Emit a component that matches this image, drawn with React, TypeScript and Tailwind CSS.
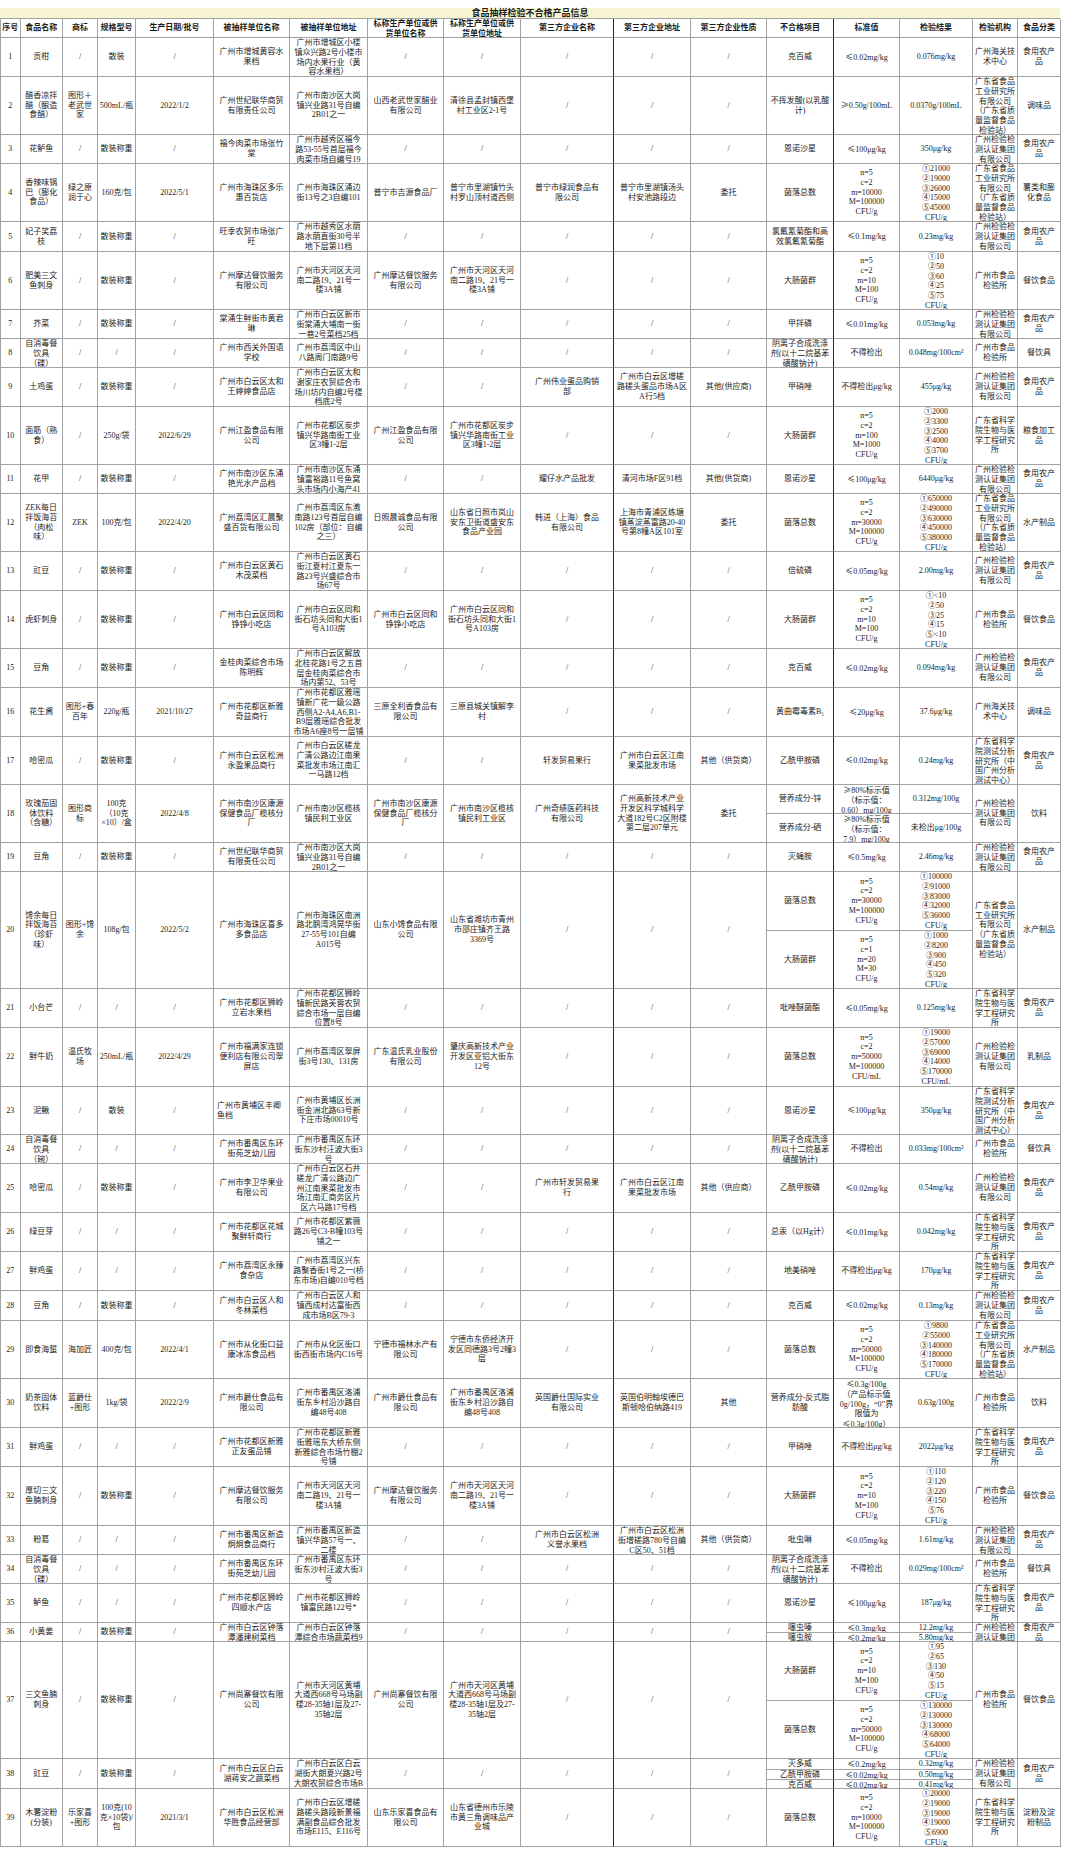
import React from 'react';

type Item = [string, string, string];
type Row = {
  c: string[];
  items: Item[];
  lab: string;
  cat: string;
  h: number[];
  left?: boolean;
};

const S = '/';
const LAB_GZ = '广州检验检测认证集团有限公司';
const LAB_GDFOOD = '广东省食品工业研究所有限公司（广东省质量监督食品检验站）';
const LAB_HG = '广州海关技术中心';
const LAB_SP = '广州市食品检验所';
const LAB_SWY = '广东省科学院生物与医学工程研究所';
const LAB_CS = '广东省科学院测试分析研究所（中国广州分析测试中心）';
const ANION = '阴离子合成洗涤剂(以十二烷基苯磺酸钠计)';
const NY = '食用农产品';

const std = (n: number, c: number, m: number, M: number, u = 'CFU/g') =>
  `n=${n}\nc=${c}\nm=${m}\nM=${M}\n${u}`;
const res = (a: (number | string)[], u = 'CFU/g') =>
  a.map((v, i) => '①②③④⑤'[i] + v).join('\n') + '\n' + u;

const R = (c: string[], items: Item[], lab: string, cat: string, h: number[], left = false): Row => ({
  c,
  items,
  lab,
  cat,
  h,
  left,
});

const rows: Row[] = [
  R(['1', '贡柑', S, '散装', S, '广州市增城黄容水果档', '广州市增城区小楼镇众兴路2号小楼市场内水果行业（黄容水果档）', S, S, S, S, S], [['克百威', '≤0.02mg/kg', '0.076mg/kg']], LAB_HG, NY, [39]),
  R(['2', '醋香凉拌醋（酿造食醋）', '图形＋老武世家', '500mL/瓶', '2022/1/2', '广州世纪联华商贸有限责任公司', '广州市南沙区大岗镇兴业路31号自编2B01之一', '山西老武世家醋业有限公司', '清徐县孟封镇西堡村工业区2-1号', S, S, S], [['不挥发酸(以乳酸计)', '≥0.50g/100mL', '0.0370g/100mL']], LAB_GDFOOD, '调味品', [58]),
  R(['3', '花鲈鱼', S, '散装称重', S, '福今肉菜市场张竹棠', '广州市越秀区福今路53-55号首层福今肉菜市场自编号19', S, S, S, S, S], [['恩诺沙星', '≤100μg/kg', '350μg/kg']], LAB_GZ, NY, [29]),
  R(['4', '香辣味锅巴（膨化食品）', '绿之原润于心', '160克/包', '2022/5/1', '广州市海珠区多乐惠百货店', '广州市海珠区涌边街13号之3自编101', '普宁市吉源食品厂', '普宁市里湖镇竹头村罗山顶村道西侧', '普宁市绿润食品有限公司', '普宁市里湖镇汤头村安池路段边', '委托'], [['菌落总数', std(5, 2, 10000, 100000), res([21000, 19000, 26000, 15000, 45000])]], LAB_GDFOOD, '薯类和膨化食品', [58]),
  R(['5', '妃子笑荔枝', S, '散装称重', S, '旺季农贸市场张广旺', '广州市越秀区水荫路水荫直街30号半地下层第11档', S, S, S, S, S], [['氯氟氰菊酯和高效氯氟氰菊酯', '≤0.1mg/kg', '0.23mg/kg']], LAB_GZ, NY, [30]),
  R(['6', '肥美三文鱼刺身', S, '散装称重', S, '广州摩达餐饮服务有限公司', '广州市天河区天河南二路19、21号一楼3A铺', '广州摩达餐饮服务有限公司', '广州市天河区天河南二路19、21号一楼3A铺', S, S, S], [['大肠菌群', std(5, 2, 10, 100), res([10, 50, 60, 25, 75])]], LAB_SP, '餐饮食品', [58]),
  R(['7', '芥菜', S, '散装称重', S, '棠涌生鲜街市黄君琳', '广州市白云区新市街棠涌大埔南一街一巷2号菜档25档', S, S, S, S, S], [['甲拌磷', '≤0.01mg/kg', '0.053mg/kg']], LAB_GZ, NY, [29]),
  R(['8', '自消毒餐饮具（碟）', S, S, S, '广州市西关外国语学校', '广州市荔湾区中山八路周门南路9号', S, S, S, S, S], [[ANION, '不得检出', '0.048mg/100cm²']], LAB_SP, '餐饮具', [29]),
  R(['9', '土鸡蛋', S, '散装称重', S, '广州市白云区太和王婷婷食品店', '广州市白云区太和谢家庄农贸综合市场川坊内自编2号楼档底2号', S, S, '广州伟业蛋品购销部', '广州市白云区增槎路槎头蛋品市场A区A行5档', '其他(供应商)'], [['甲硝唑', '不得检出μg/kg', '455μg/kg']], LAB_GZ, NY, [39]),
  R(['10', '面筋（熟食）', S, '250g/袋', '2022/6/29', '广州江盈食品有限公司', '广州市花都区炭步镇兴华路南街工业区3幢1-2层', '广州江盈食品有限公司', '广州市花都区炭步镇兴华路南街工业区3幢1-2层', S, S, S], [['大肠菌群', std(5, 2, 100, 1000), res([2000, 3300, 2500, 4000, 3700])]], LAB_SWY, '粮食加工品', [58]),
  R(['11', '花甲', S, '散装称重', S, '广州市南沙区东涌艳光水产品档', '广州市南沙区东涌镇富裕路11号鱼窝头市场内小海产41档', S, S, '耀仔水产品批发', '清河市场F区91档', '其他(供货商)'], [['恩诺沙星', '≤100μg/kg', '6440μg/kg']], LAB_GZ, NY, [29]),
  R(['12', 'ZEK每日拌饭海苔（肉松味）', 'ZEK', '100克/包', '2022/4/20', '广州荔湾区汇晨聚盛百货有限公司', '广州市荔湾区东漖南路123号首层自编102房（部位：自编之三）', '日照晨诚食品有限公司', '山东省日照市岚山安东卫街道盛安东食品产业园', '韩进（上海）食品有限公司', '上海市青浦区练塘镇蒸淀蒸富路20-40号第8幢A区101室', '委托'], [['菌落总数', std(5, 2, 30000, 100000), res([650000, 490000, 630000, 450000, 380000])]], LAB_GDFOOD, '水产制品', [58]),
  R(['13', '豇豆', S, '散装称重', S, '广州市白云区黄石木茂菜档', '广州市白云区黄石街江夏村江夏东一路23号兴盛综合市场67号', S, S, S, S, S], [['倍硫磷', '≤0.05mg/kg', '2.00mg/kg']], LAB_GZ, NY, [39]),
  R(['14', '虎虾刺身', S, '散装称重', S, '广州市白云区同和铮铮小吃店', '广州市白云区同和街石坊头同和大街1号A103房', '广州市白云区同和铮铮小吃店', '广州市白云区同和街石坊头同和大街1号A103房', S, S, S], [['大肠菌群', std(5, 2, 10, 100), '①<10\n②50\n③25\n④15\n⑤<10\nCFU/g']], LAB_SP, '餐饮食品', [58]),
  R(['15', '豆角', S, '散装称重', S, '金桂肉菜综合市场陈明辉', '广州市白云区解放北桂花路1号之五首层金桂肉菜综合市场内第52、53号', S, S, S, S, S], [['克百威', '≤0.02mg/kg', '0.094mg/kg']], LAB_GZ, NY, [39]),
  R(['16', '花生酱', '图形+春百年', '220g/瓶', '2021/10/27', '广州市花都区新雅奇益商行', '广州市花都区雅瑶镇新广花一级公路西侧A2-A4,A6,B1-B9层雅瑶综合批发市场A6座8号一层铺', '三原全利香食品有限公司', '三原县城关镇解李村', S, S, S], [['黄曲霉毒素B₁', '≤20μg/kg', '37.6μg/kg']], LAB_HG, '调味品', [49]),
  R(['17', '哈密瓜', S, '散装称重', S, '广州市白云区松洲永盈果品商行', '广州市白云区槎龙广清公路边江南果菜批发市场江南汇一马路12档', S, S, '轩发贸易果行', '广州市白云区江南果菜批发市场', '其他（供货商）'], [['乙酰甲胺磷', '≤0.02mg/kg', '0.24mg/kg']], LAB_CS, NY, [48]),
  R(['18', '玫瑰茄固体饮料（含糖）', '图形商标', '100克（10克×10）/盒', '2022/4/8', '广州市南沙区康源保健食品厂榄核分厂', '广州市南沙区榄核镇民利工业区', '广州市南沙区康源保健食品厂榄核分厂', '广州市南沙区榄核镇民利工业区', '广州奇绩医药科技有限公司', '广州高新技术产业开发区科学城科学大道182号C2区附楼第二层207单元', '委托'], [['营养成分-锌', '≥80%标示值（标示值：0.60）mg/100g', '0.312mg/100g'], ['营养成分-硒', '≥80%标示值（标示值：7.9）mg/100g', '未检出μg/100g']], LAB_GZ, '饮料', [29, 29]),
  R(['19', '豆角', S, '散装称重', S, '广州世纪联华商贸有限责任公司', '广州市南沙区大岗镇兴业路31号自编2B01之一', S, S, S, S, S], [['灭蝇胺', '≤0.5mg/kg', '2.46mg/kg']], LAB_GZ, NY, [29]),
  R(['20', '馋余每日拌饭海苔（珍虾味）', '图形+馋余', '108g/包', '2022/5/2', '广州市海珠区喜多多食品店', '广州市海珠区南洲路北鹅湾鸿晃华街27-55号101自编A015号', '山东小馋食品有限公司', '山东省潍坊市青州市邵庄镇齐王路3369号', S, S, S], [['菌落总数', std(5, 2, 30000, 100000), res([100000, 91000, 83000, 32000, 36000])], ['大肠菌群', std(5, 1, 20, 30), res([1000, 8200, 900, 450, 320])]], LAB_GDFOOD, '水产制品', [59, 58]),
  R(['21', '小台芒', S, S, S, '广州市花都区狮岭立岩水果档', '广州市花都区狮岭镇新民路芙蓉农贸综合市场一层自编位置8号', S, S, S, S, S], [['吡唑醚菌酯', '≤0.05mg/kg', '0.125mg/kg']], LAB_SWY, NY, [39]),
  R(['22', '鲜牛奶', '温氏牧场', '250mL/瓶', '2022/4/29', '广州市福满家连锁便利店有限公司翠屏店', '广州市荔湾区翠屏街3号130、131房', '广东温氏乳业股份有限公司', '肇庆高新技术产业开发区亚铝大街东12号', S, S, S], [['菌落总数', std(5, 2, 50000, 100000, 'CFU/mL'), res([19000, 57000, 69000, 14000, 170000], 'CFU/mL')]], LAB_GZ, '乳制品', [59]),
  R(['23', '泥鳅', S, '散装', S, '广州市黄埔区丰卿鱼档', '广州市黄埔区长洲街金洲北路63号新下庄市场00010号', S, S, S, S, S], [['恩诺沙星', '≤100μg/kg', '350μg/kg']], LAB_CS, NY, [48], true),
  R(['24', '自消毒餐饮具（碗）', S, S, S, '广州市番禺区东环街苑芝幼儿园', '广州市番禺区东环街东沙村汪波大街3号', S, S, S, S, S], [[ANION, '不得检出', '0.033mg/100cm²']], LAB_SP, '餐饮具', [29]),
  R(['25', '哈密瓜', S, '散装称重', S, '广州市李卫华果业有限公司', '广州市白云区石井槎龙广清公路边广州江南果菜批发市场江南汇商务区片区六马路17号档', S, S, '广州市轩发贸易果行', '广州市白云区江南果菜批发市场', '其他（供应商）'], [['乙酰甲胺磷', '≤0.02mg/kg', '0.54mg/kg']], LAB_GZ, NY, [49]),
  R(['26', '绿豆芽', S, S, S, '广州市花都区花城聚鲜轩商行', '广州市花都区紫薇路26号C3-B幢103号铺之一', S, S, S, S, S], [['总汞（以Hg计）', '≤0.01mg/kg', '0.042mg/kg']], LAB_SWY, NY, [39]),
  R(['27', '鲜鸡蛋', S, S, S, '广州市荔湾区永臻食杂店', '广州市荔湾区兴东路聚香街1号之一(桥东市场)自编010号档', S, S, S, S, S], [['地美硝唑', '不得检出μg/kg', '170μg/kg']], LAB_SWY, NY, [39]),
  R(['28', '豆角', S, '散装称重', S, '广州市白云区人和冬林菜档', '广州市白云区人和镇西成村达富街西成市场B区79-3', S, S, S, S, S], [['克百威', '≤0.02mg/kg', '0.13mg/kg']], LAB_GZ, NY, [30]),
  R(['29', '即食海蜇', '海加匠', '400克/包', '2022/4/1', '广州市从化街口益康冰冻食品档', '广州市从化区街口街西街市场内C16号', '宁德市福林水产有限公司', '宁德市东侨经济开发区同德路3号2幢3层', S, S, S], [['菌落总数', std(5, 2, 50000, 100000), res([9800, 55000, 140000, 180000, 170000])]], LAB_GDFOOD, '水产制品', [58]),
  R(['30', '奶茶固体饮料', '蓝爵仕+图形', '1kg/袋', '2022/2/9', '广州市爵仕食品有限公司', '广州市番禺区洛浦街东乡村沿沙路自编48号408', '广州市爵仕食品有限公司', '广州市番禺区洛浦街东乡村沿沙路自编48号408', '英国爵仕国际实业有限公司', '英国伯明翰埃德巴斯顿哈伯纳路419', '其他'], [['营养成分-反式脂肪酸', '≤0.3g/100g（产品标示值0g/100g，“0”界限值为≤0.3g/100g）', '0.63g/100g']], LAB_SP, '饮料', [49]),
  R(['31', '鲜鸡蛋', S, S, S, '广州市花都区新雅正友蛋品铺', '广州市花都区新雅街雅瑶东大桥东侧新雅综合市场竹棚2号铺', S, S, S, S, S], [['甲硝唑', '不得检出μg/kg', '2022μg/kg']], LAB_SWY, NY, [39]),
  R(['32', '厚切三文鱼腩刺身', S, '散装称重', S, '广州摩达餐饮服务有限公司', '广州市天河区天河南二路19、21号一楼3A铺', '广州摩达餐饮服务有限公司', '广州市天河区天河南二路19、21号一楼3A铺', S, S, S], [['大肠菌群', std(5, 2, 10, 100), res([110, 120, 220, 150, 76])]], LAB_SP, '餐饮食品', [59]),
  R(['33', '粉葛', S, S, S, '广州市番禺区新造炯炯食品商行', '广州市番禺区新造镇兴华路57号一、二楼', S, S, '广州市白云区松洲义誉水果档', '广州市白云区松洲街增槎路780号自编C区50、51档', '其他（供货商）'], [['吡虫啉', '≤0.05mg/kg', '1.61mg/kg']], LAB_GZ, NY, [29]),
  R(['34', '自消毒餐饮具（碟）', S, S, S, '广州市番禺区东环街苑芝幼儿园', '广州市番禺区东环街东沙村汪波大街3号', S, S, S, S, S], [[ANION, '不得检出', '0.029mg/100cm²']], LAB_SP, '餐饮具', [29]),
  R(['35', '鲈鱼', S, S, S, '广州市花都区狮岭四顺水产店', '广州市花都区狮岭镇富民路122号*', S, S, S, S, S], [['恩诺沙星', '≤100μg/kg', '187μg/kg']], LAB_SWY, NY, [39]),
  R(['36', '小黄姜', S, '散装称重', S, '广州市白云区钟落潭潘建树菜档', '广州市白云区钟落潭综合市场蔬菜档9号', S, S, S, S, S], [['噻虫嗪', '≤0.3mg/kg', '12.2mg/kg'], ['噻虫胺', '≤0.2mg/kg', '5.80mg/kg']], LAB_GZ, NY, [10, 9]),
  R(['37', '三文鱼腩刺身', S, '散装称重', S, '广州尚寨餐饮有限公司', '广州市天河区黄埔大道西668号马场副楼28-35轴1层及27-35轴2层', '广州尚寨餐饮有限公司', '广州市天河区黄埔大道西668号马场副楼28-35轴1层及27-35轴2层', S, S, S], [['大肠菌群', std(5, 2, 10, 100), res([95, 65, 130, 50, 15])], ['菌落总数', std(5, 2, 50000, 100000), res([130000, 130000, 130000, 68000, 64000])]], LAB_SP, '餐饮食品', [59, 58]),
  R(['38', '豇豆', S, '散装称重', S, '广州市白云区白云湖蒋安之蔬菜档', '广州市白云区白云湖街大朗夏兴路2号大朗农贸综合市场B区12号', S, S, S, S, S], [['灭多威', '≤0.2mg/kg', '0.32mg/kg'], ['乙酰甲胺磷', '≤0.02mg/kg', '0.50mg/kg'], ['克百威', '≤0.02mg/kg', '0.41mg/kg']], LAB_GZ, NY, [11, 10, 9]),
  R(['39', '木薯淀粉(分装)', '乐家喜+图形', '100克(10克×10袋)/包', '2021/3/1', '广州市白云区松洲华胜食品经营部', '广州市白云区增槎路槎头路段新景福满副食品综合批发市场E115、E116号', '山东乐家喜食品有限公司', '山东省德州市乐陵市黄三角调味品产业城', S, S, S], [['菌落总数', std(5, 2, 10000, 100000), res([20000, 19000, 19000, 19000, 6900])]], LAB_SWY, '淀粉及淀粉制品', [58]),
];

const headers = [
  '序号', '食品名称', '商标', '规格型号', '生产日期/批号', '被抽样单位名称', '被抽样单位地址',
  '标称生产单位或供货单位名称', '标称生产单位或供货单位地址', '第三方企业名称', '第三方企业地址',
  '第三方企业性质', '不合格项目', '标准值', '检验结果', '检验机构', '食品分类',
];

const colCls = [
  'px-0',
  'px-[1px]',
  'px-[1.5px]',
  'px-[1px]',
  'px-[3px]',
  'px-[3px]',
  'px-[3px]',
  'px-[3px]',
  'px-[3px]',
  'px-[11px] border-r-[#2a2a2a]',
  'px-[3px]',
  'px-[3px]',
  'px-[2px] border-r-[#2a2a2a]',
  'px-[5px]',
  'px-[2px]',
  'px-[1px]',
  'px-[2px]',
];

const spanCls = ['', '', 'row-span-2', 'row-span-3'];

const base =
  'flex flex-col [justify-content:safe_center] overflow-hidden border-r border-b border-[#a3a3a3] whitespace-pre-line';

function renderText(t: string) {
  return t.split(/([≤≥])/).map((p, i) =>
    p === '≤' || p === '≥' ? (
      <span key={i} className="font-['Noto_Sans_CJK_SC',sans-serif]">
        {p}
      </span>
    ) : (
      p
    ),
  );
}

function Cell({ text, col, span = 1, bold = false, left = false }: { text: string; col: number; span?: number; bold?: boolean; left?: boolean }) {
  return (
    <div className={`${base} ${colCls[col]} ${spanCls[span]} ${bold ? 'font-bold' : ''} ${left ? 'text-left' : 'text-center'}`}>
      <div>{renderText(text)}</div>
    </div>
  );
}

export default function App() {
  const tracks: number[] = [19];
  rows.forEach((r) => r.h.forEach((h) => tracks.push(h)));

  const cells: React.ReactNode[] = [];
  headers.forEach((h, i) => cells.push(<Cell key={`h${i}`} text={h} col={i} bold />));
  rows.forEach((r, ri) => {
    const n = r.items.length;
    r.c.forEach((t, ci) => cells.push(<Cell key={`r${ri}c${ci}`} text={t} col={ci} span={n} left={r.left && ci === 5} />));
    r.items[0].forEach((t, k) => cells.push(<Cell key={`r${ri}i0${k}`} text={t} col={12 + k} />));
    cells.push(<Cell key={`r${ri}lab`} text={r.lab} col={15} span={n} />);
    cells.push(<Cell key={`r${ri}cat`} text={r.cat} col={16} span={n} />);
    for (let j = 1; j < n; j++) {
      r.items[j].forEach((t, k) => cells.push(<Cell key={`r${ri}i${j}${k}`} text={t} col={12 + k} />));
    }
  });

  return (
    <div className="min-h-[1862px] w-[1080px] bg-white pt-[8px] font-['Liberation_Serif','Noto_Sans_CJK_SC',serif] text-[#1c1c1c] [text-spacing-trim:space-all]">
      <div className="h-[10px] w-[1060px] bg-[#f7f5d2] text-center text-[9px] font-bold leading-[10px] font-['Noto_Sans_CJK_SC',sans-serif]">
        食品抽样检验不合格产品信息
      </div>
      <div
        className="grid w-[1060px] grid-cols-[19.5px_42.5px_35px_38px_78px_76px_78px_76px_77px_93px_77px_76px_67px_66px_73px_45px_43px] border-l border-t border-[#a3a3a3] text-[8px] leading-[9.75px]"
        style={{ gridTemplateRows: tracks.map((h) => `${h}px`).join(' ') }}
      >
        {cells}
      </div>
    </div>
  );
}
